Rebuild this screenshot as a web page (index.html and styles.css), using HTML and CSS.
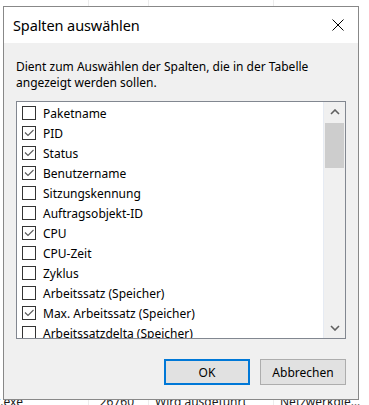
FILE: index.html
```html
<!DOCTYPE html>
<html lang="de">
<head>
<meta charset="utf-8">
<title>Spalten auswählen</title>
<link rel="stylesheet" href="styles.css">
</head>
<body>
<div class="tm">
  <div class="row"><span class="c name"></span><span class="c pid"></span><span class="c status"></span><span class="c user"></span></div>
  <div class="row"><span class="c name"></span><span class="c pid"></span><span class="c status"></span><span class="c user"></span></div>
  <div class="row"><span class="c name"></span><span class="c pid"></span><span class="c status"></span><span class="c user"></span></div>
  <div class="row"><span class="c name"></span><span class="c pid"></span><span class="c status"></span><span class="c user"></span></div>
  <div class="row"><span class="c name"></span><span class="c pid"></span><span class="c status"></span><span class="c user"></span></div>
  <div class="row"><span class="c name"></span><span class="c pid"></span><span class="c status"></span><span class="c user"></span></div>
  <div class="row"><span class="c name"></span><span class="c pid"></span><span class="c status"></span><span class="c user"></span></div>
  <div class="row"><span class="c name"></span><span class="c pid"></span><span class="c status"></span><span class="c user"></span></div>
  <div class="row"><span class="c name"></span><span class="c pid"></span><span class="c status"></span><span class="c user"></span></div>
  <div class="row"><span class="c name"></span><span class="c pid"></span><span class="c status"></span><span class="c user"></span></div>
  <div class="row"><span class="c name"></span><span class="c pid"></span><span class="c status"></span><span class="c user"></span></div>
  <div class="row"><span class="c name"></span><span class="c pid"></span><span class="c status"></span><span class="c user"></span></div>
  <div class="row"><span class="c name"></span><span class="c pid"></span><span class="c status"></span><span class="c user"></span></div>
  <div class="row"><span class="c name"></span><span class="c pid"></span><span class="c status"></span><span class="c user"></span></div>
  <div class="row"><span class="c name"></span><span class="c pid"></span><span class="c status"></span><span class="c user"></span></div>
  <div class="row"><span class="c name"></span><span class="c pid"></span><span class="c status"></span><span class="c user"></span></div>
  <div class="row"><span class="c name"></span><span class="c pid"></span><span class="c status"></span><span class="c user"></span></div>
  <div class="row"><span class="c name">svchost.exe</span><span class="c pid">26760</span><span class="c status">Wird ausgeführt</span><span class="c user">Netzwerkdienst</span></div>
</div>

<div class="dialog" role="dialog" aria-label="Spalten auswählen">
  <div class="titlebar">
    <span class="title">Spalten auswählen</span>
    <svg class="close" width="12" height="12" viewBox="0 0 12 12"><path d="M0.5 0.5 L11.5 11.5 M11.5 0.5 L0.5 11.5" stroke="#000" stroke-width="1" fill="none"/></svg>
  </div>
  <div class="body">
    <p class="desc">Dient zum Auswählen der Spalten, die in der Tabelle<br>angezeigt werden sollen.</p>
    <div class="list">
      <div class="items">
        <div class="item"><span class="cb"></span><span>Paketname</span></div>
        <div class="item"><span class="cb on"><svg viewBox="0 0 12 12" width="12" height="12"><path d="M2 5.5 L5 8.5 L10.5 3" stroke="#5a5a5a" stroke-width="1.1" fill="none"/></svg></span><span>PID</span></div>
        <div class="item"><span class="cb on"><svg viewBox="0 0 12 12" width="12" height="12"><path d="M2 5.5 L5 8.5 L10.5 3" stroke="#5a5a5a" stroke-width="1.1" fill="none"/></svg></span><span>Status</span></div>
        <div class="item"><span class="cb on"><svg viewBox="0 0 12 12" width="12" height="12"><path d="M2 5.5 L5 8.5 L10.5 3" stroke="#5a5a5a" stroke-width="1.1" fill="none"/></svg></span><span>Benutzername</span></div>
        <div class="item"><span class="cb"></span><span>Sitzungskennung</span></div>
        <div class="item"><span class="cb"></span><span>Auftragsobjekt-ID</span></div>
        <div class="item"><span class="cb on"><svg viewBox="0 0 12 12" width="12" height="12"><path d="M2 5.5 L5 8.5 L10.5 3" stroke="#5a5a5a" stroke-width="1.1" fill="none"/></svg></span><span>CPU</span></div>
        <div class="item"><span class="cb"></span><span>CPU-Zeit</span></div>
        <div class="item"><span class="cb"></span><span>Zyklus</span></div>
        <div class="item"><span class="cb"></span><span>Arbeitssatz (Speicher)</span></div>
        <div class="item"><span class="cb on"><svg viewBox="0 0 12 12" width="12" height="12"><path d="M2 5.5 L5 8.5 L10.5 3" stroke="#5a5a5a" stroke-width="1.1" fill="none"/></svg></span><span>Max. Arbeitssatz (Speicher)</span></div>
        <div class="item"><span class="cb"></span><span>Arbeitssatzdelta (Speicher)</span></div>
      </div>
      <div class="scroll">
        <div class="arrow"><svg width="10" height="6" viewBox="0 0 10 6"><path d="M1 5 L5 1 L9 5" stroke="#606060" stroke-width="1.6" fill="none"/></svg></div>
        <div class="thumb"></div>
        <div class="track"></div>
        <div class="arrow"><svg width="10" height="6" viewBox="0 0 10 6"><path d="M1 1 L5 5 L9 1" stroke="#606060" stroke-width="1.6" fill="none"/></svg></div>
      </div>
    </div>
    <div class="buttons">
      <button class="btn default">OK</button>
      <button class="btn">Abbrechen</button>
    </div>
  </div>
</div>
</body>
</html>
```

FILE: styles.css
```css
html, body {
  margin: 0;
  padding: 0;
  background: #fff;
  overflow: hidden;
}

body {
  width: 369px;
  height: 405px;
  position: relative;
  font-family: "Segoe UI", "Noto Sans", sans-serif;
  font-size: 12px;
  color: #000;
}

/* Background task manager table */
.tm {
  margin-top: -18px;
}

.row {
  display: grid;
  grid-template-columns: 89px 60px 125px 1fr;
  height: 24px;
  line-height: 24px;
  color: #1a1a1a;
}

.c {
  border-right: 1px solid #ececec;
  padding: 0 6px;
  white-space: nowrap;
  overflow: hidden;
  text-overflow: ellipsis;
}

.name {
  padding: 0;
  text-indent: -42px;
}

.pid {
  text-align: right;
  padding-right: 14px;
}

.user {
  border-right: 0;
  padding-right: 7px;
}

/* Dialog */
.dialog {
  position: absolute;
  left: 3px;
  top: 6px;
  width: 354px;
  height: 392px;
  border: 1px solid #888;
  background: #f0f0f0;
  display: flex;
  flex-direction: column;
}

.titlebar {
  height: 36px;
  background: #fff;
  display: flex;
  align-items: center;
  justify-content: space-between;
  padding: 0 14px 0 9px;
  flex: none;
}

.title {
  font-size: 14.5px;
  letter-spacing: -0.1px;
}

.body {
  flex: 1;
  padding: 16px 12px 0 12px;
  display: flex;
  flex-direction: column;
}

.desc {
  margin: 0 0 10px 0;
  line-height: 16px;
  letter-spacing: 0;
}

.list {
  height: 238px;
  box-sizing: border-box;
  border: 1px solid #828790;
  background: #fff;
  display: flex;
  overflow: hidden;
}

.items {
  flex: 1;
  padding-top: 1px;
  overflow: hidden;
}

.item {
  height: 20px;
  display: flex;
  align-items: center;
  padding-left: 5px;
  gap: 7px;
  white-space: nowrap;
}

.cb {
  width: 14px;
  height: 14px;
  box-sizing: border-box;
  border: 1px solid #333;
  background: #fff;
  display: flex;
  align-items: center;
  justify-content: center;
  flex: none;
}

.scroll {
  width: 21px;
  border-left: 1px solid #e6ebf3;
  background: #f0f0f0;
  display: flex;
  flex-direction: column;
  flex: none;
}

.arrow {
  height: 20px;
  display: flex;
  align-items: center;
  justify-content: center;
  flex: none;
}

.thumb {
  height: 45px;
  margin: 1px 1px 0 1px;
  background: #cdcdcd;
  flex: none;
}

.track {
  flex: 1;
}

.buttons {
  display: flex;
  justify-content: flex-end;
  gap: 10px;
  margin-top: 20px;
}

.btn {
  width: 86px;
  height: 26px;
  box-sizing: border-box;
  border: 1px solid #adadad;
  background: #e1e1e1;
  font-family: inherit;
  font-size: 12px;
  color: #000;
  padding: 0;
}

.btn.default {
  border: 2px solid #0078d7;
}
```
